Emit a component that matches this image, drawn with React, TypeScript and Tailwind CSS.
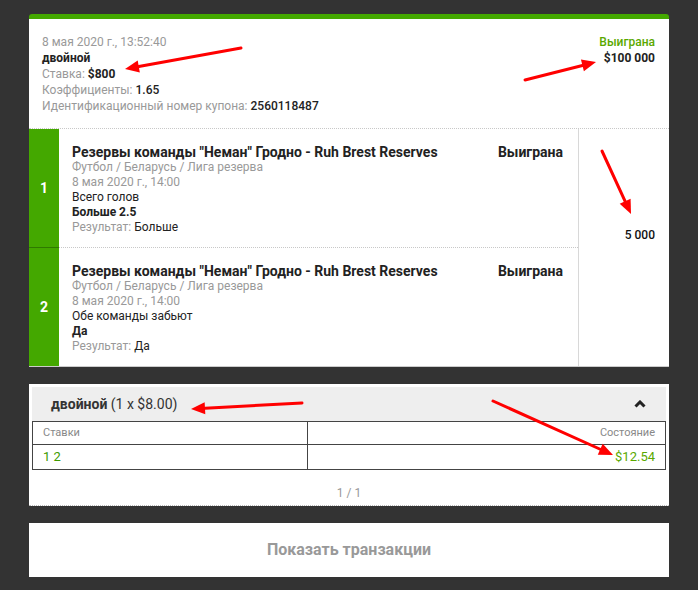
import * as React from "react";

function Arrow({ x1, y1, x2, y2 }: { x1: number; y1: number; x2: number; y2: number }) {
  const a = Math.atan2(y2 - y1, x2 - x1);
  const len = 14;
  const w = 6;
  const bx = x2 - Math.cos(a) * len;
  const by = y2 - Math.sin(a) * len;
  const px = -Math.sin(a) * w;
  const py = Math.cos(a) * w;
  return (
    <g>
      <line x1={x1} y1={y1} x2={bx} y2={by} stroke="#f00" strokeWidth={3} strokeLinecap="round" />
      <polygon points={`${x2},${y2} ${bx + px},${by + py} ${bx - px},${by - py}`} fill="#f00" />
    </g>
  );
}

interface Selection {
  n: number;
  market: string;
  pick: string;
  result: string;
}

const selections: Selection[] = [
  { n: 1, market: "Всего голов", pick: "Больше 2.5", result: "Больше" },
  { n: 2, market: "Обе команды забьют", pick: "Да", result: "Да" },
];

function SelectionRow({ s, last }: { s: Selection; last: boolean }) {
  return (
    <div className="flex">
      <div
        className={`w-[30px] shrink-0 bg-[#44a800] flex items-center justify-center text-white font-bold text-[14px] ${
          last ? "" : "border-b border-[#2f7a00]"
        }`}
      >
        {s.n}
      </div>
      <div
        className={`flex-1 flex justify-between pl-[13px] pr-[15px] pt-[15px] pb-[12px] ${
          last ? "" : "border-b border-dotted border-[#c8c8c8]"
        }`}
      >
        <div className="text-[12px] leading-[15px] text-[#222]">
          <div className="text-[14px] leading-[16px] font-bold text-[#222]">
            Резервы команды "Неман" Гродно - Ruh Brest Reserves
          </div>
          <div className="text-[#999]">Футбол / Беларусь / Лига резерва</div>
          <div className="text-[#999]">8 мая 2020 г., 14:00</div>
          <div>{s.market}</div>
          <div className="font-bold">{s.pick}</div>
          <div>
            <span className="text-[#999]">Результат: </span>
            {s.result}
          </div>
        </div>
        <div className="text-[14px] leading-[16px] font-bold text-[#222]">Выиграна</div>
      </div>
    </div>
  );
}

export default function App() {
  return (
    <div className="relative h-[590px] w-[698px] bg-[#333333] px-[29px] pt-[14px] font-['Roboto',sans-serif] overflow-hidden">
      {/* coupon card */}
      <div className="bg-white border-t-[5px] border-[#44a800] rounded-t-[3px] border-b border-b-[#ccc]">
        <div className="flex justify-between pl-[13px] pr-[14px] pt-[15px] pb-[14px] text-[12px] leading-[16px]">
          <div className="text-[#999]">
            <div>8 мая 2020 г., 13:52:40</div>
            <div className="font-bold text-[#222]">двойной</div>
            <div>
              Ставка: <span className="font-bold text-[#222]">$800</span>
            </div>
            <div>
              Коэффициенты: <span className="font-medium text-[#222]">1.65</span>
            </div>
            <div>
              Идентификационный номер купона: <span className="font-medium text-[#222]">2560118487</span>
            </div>
          </div>
          <div className="text-right">
            <div className="text-[#5aa800] font-medium">Выиграна</div>
            <div className="font-bold text-[#222]">$100 000</div>
          </div>
        </div>
        <div className="flex border-t border-dotted border-[#c8c8c8]">
          <div className="flex-1">
            {selections.map((s, i) => (
              <SelectionRow key={s.n} s={s} last={i === selections.length - 1} />
            ))}
          </div>
          <div className="w-[91px] border-l border-[#d8d8d8] flex items-center justify-end pr-[14px] pb-[25px] text-[12px] font-medium text-[#111]">
            5 000
          </div>
        </div>
      </div>

      {/* system card */}
      <div className="mt-[17px] bg-white px-[3px] pt-[3px] border-b border-dotted border-[#bbb]">
        <div className="h-[34px] bg-[#eeeeee] flex items-center justify-between pl-[19px] pr-[20px]">
          <div className="text-[14px] text-[#333]">
            <span className="font-bold">двойной</span> (1 x $8.00)
          </div>
          <svg width="12" height="8" viewBox="0 0 12 8">
            <path d="M1.5 6.5 L6 2 L10.5 6.5" fill="none" stroke="#222" strokeWidth="3" />
          </svg>
        </div>
        <div className="border border-[#444] grid grid-cols-[275px_1fr] text-[11px]">
          <div className="h-[23px] flex items-center pl-[10px] text-[#888] border-r border-b border-[#444]">Ставки</div>
          <div className="h-[23px] flex items-center justify-end pr-[10px] text-[#888] border-b border-[#444]">Состояние</div>
          <div className="h-[24px] flex items-center pl-[10px] text-[13px] text-[#3c9a00] border-r border-[#444]">1 2</div>
          <div className="h-[24px] flex items-center justify-end pr-[10px] text-[13px] text-[#5aa800]">$12.54</div>
        </div>
        <div className="pt-[16px] pb-[5px] text-center text-[12px] leading-[14px] text-[#999]">1 / 1</div>
      </div>

      {/* transactions */}
      <div className="mt-[17px] h-[54px] bg-white flex items-center justify-center text-[16px] font-bold text-[#999]">
        Показать транзакции
      </div>

      <svg className="absolute left-0 top-0 pointer-events-none" width="698" height="590">
        <Arrow x1={241} y1={48} x2={125} y2={69} />
        <Arrow x1={525} y1={80} x2={596} y2={62} />
        <Arrow x1={602} y1={151} x2={631} y2={214} />
        <Arrow x1={302} y1={403} x2={191} y2={409} />
        <Arrow x1={493} y1={401} x2={613} y2={455} />
      </svg>
    </div>
  );
}
